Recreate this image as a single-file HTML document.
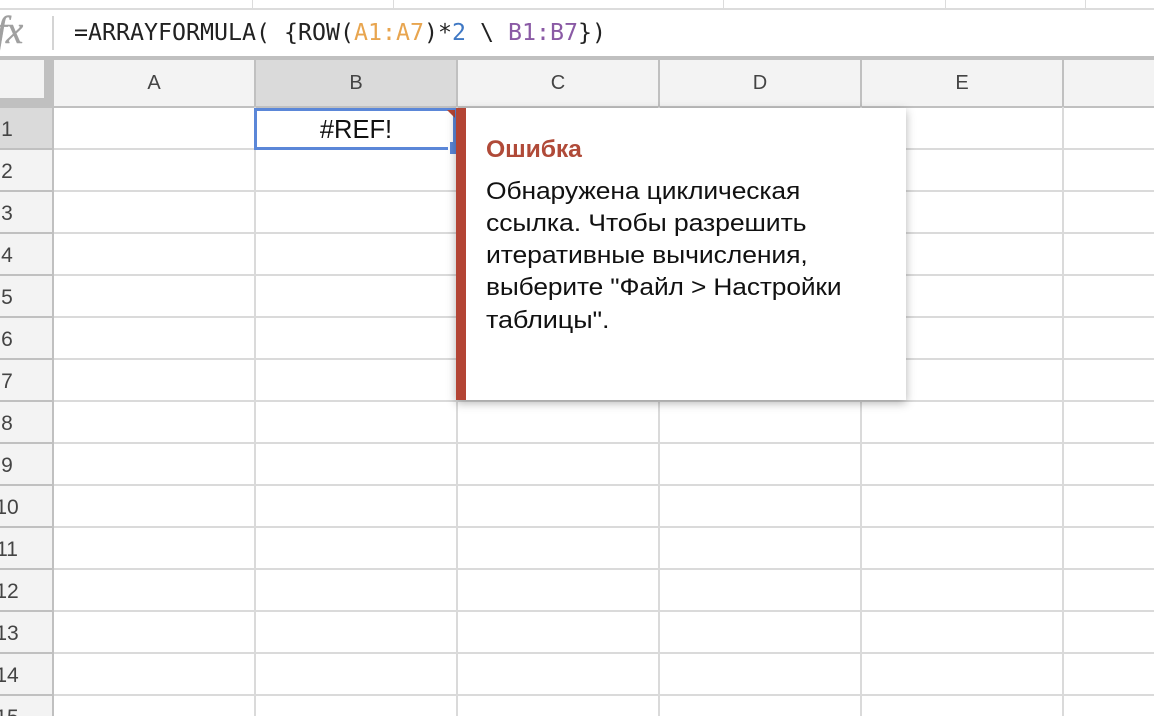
<!DOCTYPE html>
<html lang="ru"><head><meta charset="utf-8">
<style>
html,body{margin:0;padding:0;background:#fff}
#p{position:relative;width:1154px;height:716px;overflow:hidden;background:#fff;font-family:"Liberation Sans",sans-serif}
#p div{position:absolute}
.v{top:107px;bottom:0;width:2px;background:#dadada}
.h{left:53px;right:0;height:2px;background:#dadada}
.rh{left:0;width:52px;height:40px;background:#f3f3f3;border-bottom:2px solid #c0c0c0}
.rn{position:absolute;top:0;left:-43px;width:100px;text-align:center;line-height:44px;font-size:21px;color:#444;white-space:nowrap}
.ch{top:60px;height:46px;width:200px;background:#f3f3f3;text-align:center;font-size:20px;line-height:47px;color:#444}
.cl{top:60px;height:46px;width:2px;background:#c0c0c0}
.t{left:486px;font-size:24px;line-height:32px;color:#111;white-space:nowrap;letter-spacing:-.1px;transform-origin:0 50%;font-family:"Liberation Sans",sans-serif}
</style></head><body><div id="p">

<div style="left:0;right:0;top:8px;height:2px;background:#dcdcdc"></div>
<div style="left:252px;top:0;width:1px;height:9px;background:#dcdcdc"></div>
<div style="left:393px;top:0;width:1px;height:9px;background:#dcdcdc"></div>
<div style="left:723px;top:0;width:1px;height:9px;background:#dcdcdc"></div>
<div style="left:945px;top:0;width:1px;height:9px;background:#dcdcdc"></div>
<div style="left:1085px;top:0;width:1px;height:9px;background:#dcdcdc"></div>

<div style="left:-4px;top:10px;font-family:'Liberation Serif',serif;font-style:italic;font-size:39px;line-height:42px;color:#a0a0a0;letter-spacing:-1px;-webkit-text-stroke:.5px #a0a0a0">fx</div>
<div style="left:52px;top:16px;width:2px;height:34px;background:#d4d4d4"></div>
<div style="left:74px;top:18px;font-family:'DejaVu Sans Mono',monospace;font-size:23.25px;line-height:30px;color:#222;white-space:pre">=ARRAYFORMULA( {ROW(<span style="color:#e8a54f">A1:A7</span>)*<span style="color:#3f78c4">2</span> \ <span style="color:#8a5aa5">B1:B7</span>})</div>

<div style="left:0;right:0;top:56px;height:4px;background:#c0c0c0"></div>
<div style="left:0;top:60px;width:44px;height:38px;background:#f3f3f3"></div>
<div style="left:44px;top:60px;width:9px;height:47px;background:#c0c0c0"></div>
<div style="left:0;top:98px;width:44px;height:9px;background:#c0c0c0"></div>

<div class="ch" style="left:54px">A</div>
<div class="ch" style="left:256px;background:#dadada">B</div>
<div class="ch" style="left:458px">C</div>
<div class="ch" style="left:660px">D</div>
<div class="ch" style="left:862px">E</div>
<div class="ch" style="left:1064px;width:90px"></div>
<div class="cl" style="left:52px"></div>
<div class="cl" style="left:254px"></div>
<div class="cl" style="left:456px"></div>
<div class="cl" style="left:658px"></div>
<div class="cl" style="left:860px"></div>
<div class="cl" style="left:1062px"></div>
<div style="left:0;right:0;top:106px;height:2px;background:#c0c0c0"></div>

<div class="v" style="left:254px"></div>
<div class="v" style="left:456px"></div>
<div class="v" style="left:658px"></div>
<div class="v" style="left:860px"></div>
<div class="v" style="left:1062px"></div>
<div class="h" style="top:148px"></div>
<div class="h" style="top:190px"></div>
<div class="h" style="top:232px"></div>
<div class="h" style="top:274px"></div>
<div class="h" style="top:316px"></div>
<div class="h" style="top:358px"></div>
<div class="h" style="top:400px"></div>
<div class="h" style="top:442px"></div>
<div class="h" style="top:484px"></div>
<div class="h" style="top:526px"></div>
<div class="h" style="top:568px"></div>
<div class="h" style="top:610px"></div>
<div class="h" style="top:652px"></div>
<div class="h" style="top:694px"></div>

<div class="rh" style="top:108px;background:#dadada"><span class="rn">1</span></div>
<div class="rh" style="top:150px"><span class="rn">2</span></div>
<div class="rh" style="top:192px"><span class="rn">3</span></div>
<div class="rh" style="top:234px"><span class="rn">4</span></div>
<div class="rh" style="top:276px"><span class="rn">5</span></div>
<div class="rh" style="top:318px"><span class="rn">6</span></div>
<div class="rh" style="top:360px"><span class="rn">7</span></div>
<div class="rh" style="top:402px"><span class="rn">8</span></div>
<div class="rh" style="top:444px"><span class="rn">9</span></div>
<div class="rh" style="top:486px"><span class="rn">10</span></div>
<div class="rh" style="top:528px"><span class="rn">11</span></div>
<div class="rh" style="top:570px"><span class="rn">12</span></div>
<div class="rh" style="top:612px"><span class="rn">13</span></div>
<div class="rh" style="top:654px"><span class="rn">14</span></div>
<div class="rh" style="top:696px"><span class="rn">15</span></div>
<div style="left:52px;top:107px;width:2px;height:609px;background:#c0c0c0"></div>

<div style="left:254px;top:108px;width:196px;height:36px;border:3px solid #5b87d8;background:#fff"></div>
<div style="left:256px;top:115px;width:200px;text-align:center;font-size:25.5px;line-height:30px;color:#111">#REF!</div>
<div style="left:447px;top:110px;width:0;height:0;border-top:8px solid #b34434;border-left:8px solid transparent"></div>
<div style="left:448px;top:147px;width:8px;height:3px;background:#fff"></div>
<div style="left:450px;top:142px;width:6px;height:12px;background:#5b87d8"></div>

<div style="left:456px;top:108px;width:450px;height:292px;background:#fff;box-shadow:0 3px 9px rgba(0,0,0,.3)"></div>
<div style="left:456px;top:108px;width:10px;height:292px;background:#b34434"></div>
<div class="t" style="top:134px;font-weight:bold;color:#b04a38;transform:scaleX(1.03)">Ошибка</div>
<div class="t" style="top:176px;transform:scaleX(1.101)">Обнаружена циклическая</div>
<div class="t" style="top:208px;transform:scaleX(1.11)">ссылка. Чтобы разрешить</div>
<div class="t" style="top:240px;transform:scaleX(1.107)">итеративные вычисления,</div>
<div class="t" style="top:272px;transform:scaleX(1.096)">выберите "Файл &gt; Настройки</div>
<div class="t" style="top:305px;transform:scaleX(1.128)">таблицы".</div>

</div></body></html>
